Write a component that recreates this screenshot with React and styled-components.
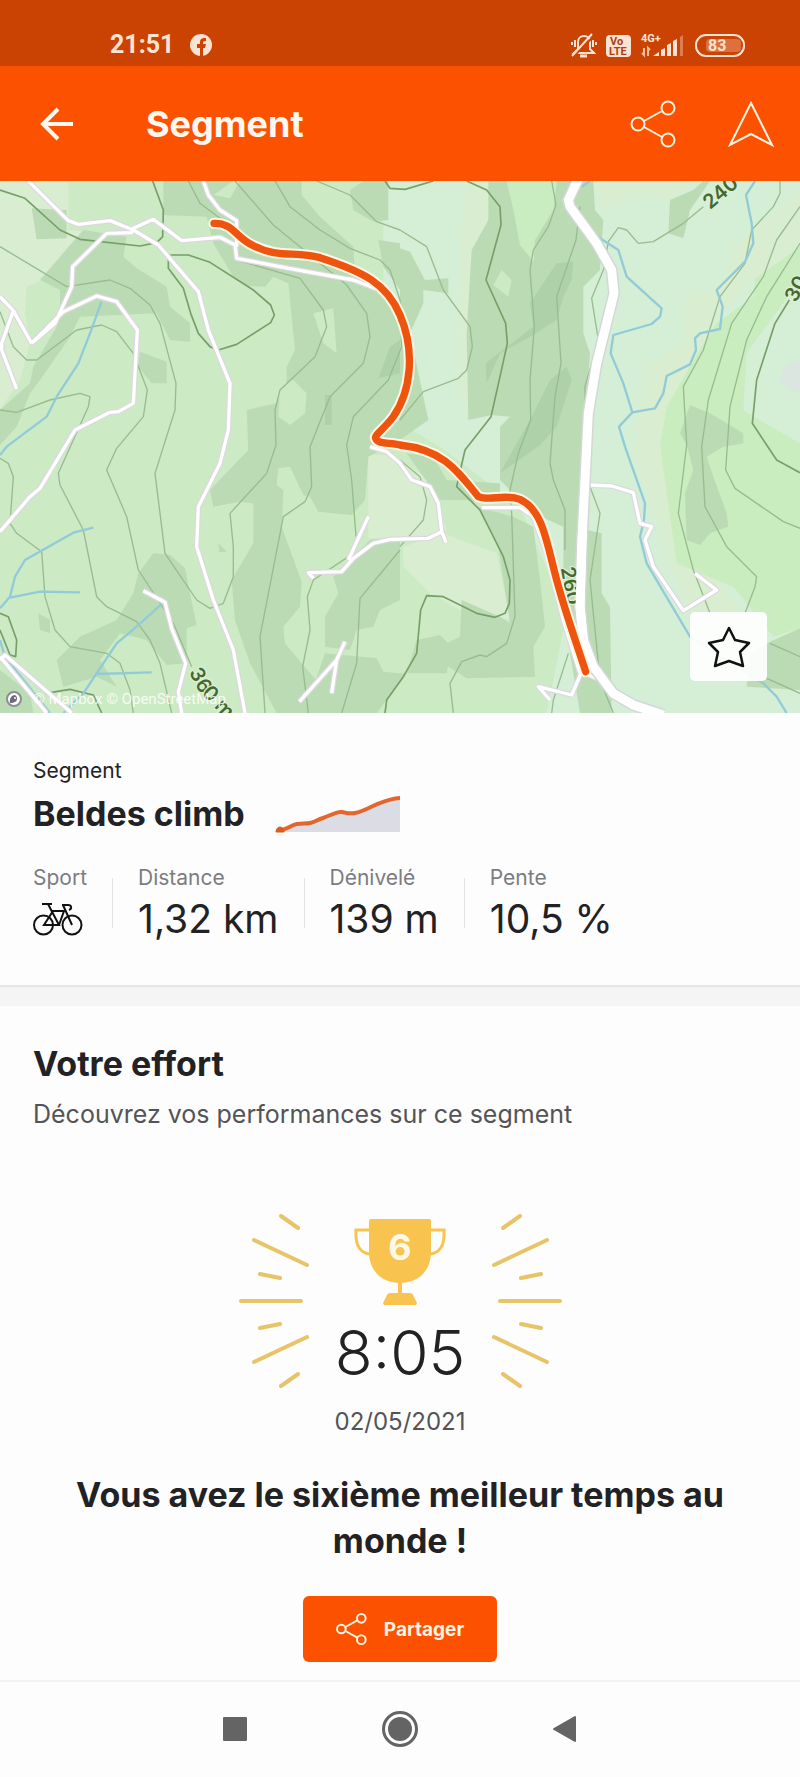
import React, { useState } from 'react';
import styled, { createGlobalStyle } from 'styled-components';

const GlobalStyle = createGlobalStyle`
    * {
        box-sizing: border-box;
    }

    body {
        margin: 0;
        background-color: #fdfdfd;
        color: #222225;
        font-family: Inter, 'Liberation Sans', sans-serif;
    }

    h1, h2, p, dl, dt, dd {
        margin: 0;
    }
`;

const stats = [
    { label: 'Distance', value: '1,32 km' },
    { label: 'Dénivelé', value: '139 m' },
    { label: 'Pente', value: '10,5 %' },
];

const fields = [
    'M0 3H205V150L320 160 220 260 80 320 75 400 90 490 60 600 0 690Z',
    'M1105 825L1180 825 1290 900 1340 1050 1290 1075 1105 1075Z',
    'M1210 1100L1330 1060 1490 1120 1530 1320 1380 1290 1290 1240 1210 1160Z',
    'M2200 200L2400 30V200L2260 300 2150 420 2000 680 1980 795 2030 1150 2150 1200 2250 1330 2060 1300 1960 1000 1900 800 1940 560 2050 480 2060 340 2160 330Z',
    'M1780 3H2100L2010 60 1920 40 1810 90Z',
    'M1400 3H1465V120L1415 210 1410 440 1400 700 1370 600 1380 200Z',
];

const woods = [
    'M490 3H905V45L960 110 1060 200 1065 285 1200 390 1225 500 1240 560 1285 720 1200 780 1105 830 1095 960 1055 1005 955 995 930 950 910 945 870 860 835 865 830 915 850 930 845 1040 905 1205 900 1280 850 1340 855 1390 905 1450 1000 1560 1010 1599H830L750 1450 705 1320 695 1200 760 1090 760 970 720 965 640 980 630 930 745 810 740 690 830 670 860 610 860 560 885 510 865 310 820 290 795 320 745 318 700 290 640 190 620 110 490 105Z',
    'M250 150L380 170 370 230 410 265 500 320 510 380 570 430 570 485 510 480 470 400 240 410 210 470 120 600 90 640 50 740 0 795V690L90 610 100 560 170 440 180 400 180 330 120 300 180 230Z',
    'M95 85L200 90V175L110 178Z',
    'M1050 30L1090 3H1165V120L1120 125 1060 90Z',
    'M1135 180L1200 190V330L1150 260Z',
    'M420 515L500 545V610L455 610 415 560Z',
    'M415 1180L460 1120 510 1125 555 1165 580 1290 590 1335 560 1345 560 1450 500 1455 440 1380 360 1360 300 1440 350 1520 290 1490 190 1520 170 1440 240 1370 350 1320 400 1240Z',
    'M115 1300L150 1320V1360L120 1350Z',
    'M655 1090L680 1115 658 1117Z',
    'M0 1470L90 1540 100 1599H0Z',
    'M1200 1070L1110 1080 1000 1190 1015 1240 975 1310 975 1400 1050 1410 1070 1350 1120 1340 1140 1290 1200 1260Z',
    'M975 1420L1130 1435 1150 1475 1200 1480 1340 1480 1355 1400 1320 1365 1250 1380 1220 1480 1130 1599H880L940 1520Z',
    'M1465 3H1520L1540 90 1560 195 1600 245 1605 180 1660 90 1670 3H1780L1785 90 1810 120 1800 270 1750 320 1750 460 1770 520 1750 795 1760 1050 1805 1060 1805 1240 1830 1280 1835 1599H1740L1710 1420 1690 1200 1690 1040 1600 1000 1500 900 1500 740 1530 710 1475 705 1405 720 1400 460 1415 210 1465 120Z',
    'M1200 205L1230 215 1275 300 1345 295V340L1270 330 1270 370 1230 460 1285 720 1200 760Z',
    'M2010 60L2080 30 2110 3H2130L2070 90 2050 175 2005 160Z',
    'M2070 675L2130 700 2230 760 2230 790 2170 800 2120 830 2140 890 2180 1000 2185 1040 2130 1060 2100 1095 2060 1080 2055 940 2080 870 2060 795 2040 760Z',
    'M2400 1345L2310 1385 2250 1420 2240 1520 2400 1530Z',
    'M1220 820L1300 830 1340 900 1500 910 1500 970 1440 970 1400 960 1320 960Z',
    'M1430 980L1540 1010 1600 1040 1620 1200 1635 1340 1600 1400 1605 1490 1400 1495 1280 1420 1380 1370 1385 1260 1500 1310 1530 1330 1495 1100Z',
];

const thickets = [
    'M1670 250L1720 245 1715 300 1690 350 1670 420 1590 470 1500 520 1460 610 1457 550 1600 440 1590 370Z',
    'M1650 600L1700 560 1715 600 1670 740 1620 795 1500 880 1590 720Z',
    'M1170 500L1200 480V580L1135 595Z',
    'M975 645H995V735H975Z',
];

const clearings = [
    'M940 400L1000 385 1010 520 970 490Z',
    'M840 620L880 600 920 640 915 700 870 735 835 710Z',
    'M1505 270L1535 300 1525 350 1480 315Z',
    'M640 45L700 3H720L690 55Z',
];

const roads = [
    'M85 3L205 122 235 133 330 122 400 150 475 195 595 335 625 450 690 610 685 750 660 850 595 980 590 1100 640 1260 700 1410 735 1599',
    'M95 490L165 430 215 320 218 260 320 160 395 158 400 145 460 118 545 182 660 172 705 195 710 235 850 262 1060 300 1140 330',
    'M610 3L625 45 660 90 710 122V200',
    'M0 350L40 392 95 490M40 392L5 490 5 510 50 627',
    'M95 490L190 395 290 348 350 365 412 450 400 670 355 695 330 697 225 750 120 925 90 950 0 1055',
    'M430 1232L495 1267 515 1345 557 1450 535 1535 545 1599',
    'M898 1565L1010 1440 1035 1385M1010 1440L995 1540',
    'M1105 1010L1045 1140M940 1195L925 1178 1025 1175 1060 1135 1120 1090 1170 1078 1285 1075 1325 1055M1110 800L1160 815 1200 850 1235 900 1290 920 1315 970 1325 1055 1338 1087',
    'M0 1430L140 1599M0 1440L15 1425 215 1599',
    'M1445 983H1560L1600 1010 1640 1120 1690 1320 1740 1480',
    'M1770 915L1835 918 1900 938 1920 1030 1955 1040 1935 1080 1960 1160 2050 1292 2150 1230 2085 1180',
    'M1650 1560L1615 1520 1715 1545 1745 1475 1790 1495',
];

const mainRoad =
    'M1738 -10L1705 60 1710 80 1790 190 1835 270 1842 340 1790 550 1765 700 1755 900 1745 1100 1740 1280 1750 1380 1780 1460 1840 1540 1900 1575 1990 1605';

const route =
    'M642 130C700 128 705 172 760 197C835 235 885 213 960 233C1090 275 1160 310 1200 405C1245 510 1235 630 1180 710C1150 750 1122 765 1127 775C1135 795 1170 786 1200 795C1330 810 1370 870 1435 950C1470 965 1510 940 1560 958C1630 990 1640 1090 1670 1200C1700 1310 1730 1390 1757 1475';

const rivers = [
    'M305 365L270 460 235 550 170 650 140 710 20 800 0 825',
    'M280 1043L220 1058 75 1140 45 1190 30 1250 0 1285M30 1253L120 1235 240 1237',
    'M485 1272L410 1340 350 1390 290 1480 250 1540 190 1599M290 1482L455 1477',
    'M0 1380L15 1430 150 1599',
    'M1770 3L1745 20M1785 165L1855 210 1880 290 1985 385 1980 410 1955 432 1840 465 1832 520 1870 610 1897 697 1965 685 1990 640 2000 588 2070 553 2088 510 2085 475 2100 460 2160 447 2168 380 2150 330 2235 245 2260 190 2255 130 2238 45 2265 3',
    'M1897 697L1857 740 1875 800 1935 970 1932 1020 1920 1070 1940 1150 2070 1370 2290 1510 2330 1550 2360 1599',
];

const contours = [
    'M0 200L200 320 330 300 390 325 450 375 480 430 528 610 525 690 465 880 495 1120 590 1260 630 1285 670 1270 700 1190 700 1100 690 1000 800 880 828 795 825 690 840 630 945 530 980 440 970 390 900 295 710 240',
    'M0 395L40 500 80 540 110 540 230 450 305 435 350 455 400 520 442 630 430 710 350 805 320 870 380 1010 415 1170 520 1330 575 1460',
    'M0 690L50 697 150 660 240 640 270 650 265 680 175 880 180 915 250 1050 290 1250 320 1280 410 1325 450 1380 480 1450 515 1599',
    'M0 835L25 850 40 890 30 1030 50 1060 125 1115 135 1250 165 1350 210 1400 320 1420 360 1450 390 1530 400 1599',
    'M565 3L600 70 680 130 710 155',
    'M705 3L820 135 900 200 1040 315 1100 400 1110 470 1090 550 990 650 930 800 935 920 915 965 850 1010 780 1370 795 1599',
    'M825 3L870 80 960 150 1050 205 1140 240 1170 270 1200 360 1205 500 1165 600 1060 710 1040 795 1055 900 1068 1070',
    'M950 3L1050 45 1130 125 1200 150 1280 200 1330 330 1410 440 1417 500 1400 570 1375 595 1270 635 1200 720',
    'M1200 1110L1080 1255 1070 1450 1025 1599',
    'M1060 1120L940 1200 922 1250 930 1350 908 1460 925 1599',
    'M1655 3L1668 75 1645 140 1600 210 1590 270 1603 440 1590 600 1592 720 1555 820 1530 930 1535 1000 1545 1310 1520 1390 1460 1430 1440 1425 1385 1445 1350 1510 1360 1599',
    'M1740 80L1728 180 1670 350 1683 550 1665 650 1650 850 1660 900 1695 990 1695 1110',
    'M2110 80L2050 130 1960 185 1915 190 1880 150 1855 143 1825 185 1810 270 1775 355 1795 480 1755 620 1755 760 1770 920 1800 1000 1770 1200 1790 1400 1800 1500 1840 1599',
    'M2340 3L2340 40 2320 80 2255 150 2235 250 2160 350 2110 510 2050 620 2060 795 2035 1000 2080 1170 2130 1300',
    'M2400 80L2330 180 2290 290 2195 430 2125 660 2105 800 2115 980 2180 1100 2270 1190 2265 1220 2235 1300',
    'M2400 190L2300 350 2240 480 2190 680 2177 870 2205 925 2350 1025 2400 1045',
    'M1705 1420L1660 1560 1655 1599',
    'M1200 840L1260 890 1280 960 1270 1020 1200 1100',
    'M2310 1390L2400 1430M2300 1495L2400 1540',
];

const majorContours = [
    'M0 30L75 55 180 150 240 178 420 198 470 188 488 170 490 90 458 3',
    'M505 225H565L630 247 760 330 812 375 823 405 812 428 710 493 655 510 630 500 595 460 572 400 550 325 505 265Z',
    'M1155 3L1170 25 1215 28 1300 3M1400 3L1460 30 1500 80 1503 135 1458 300 1517 430 1522 490 1500 590 1473 710 1395 810 1370 920 1440 990 1510 1130 1530 1200 1528 1270 1515 1300 1485 1312 1430 1300 1330 1250 1280 1247 1262 1290 1250 1420 1210 1490 1160 1560 1155 1599',
    'M2368 360L2325 430 2270 600 2257 730 2330 840 2400 878',
    'M0 1300L25 1310 50 1380 47 1430 30 1425 0 1350',
    'M135 1540L210 1528 280 1545 305 1599',
];

const RouteMap = () => (
    <MapDrawing viewBox="0 3 2400 1596" role="img" aria-label="Carte du segment">
        <rect width="2400" height="1600" fill="#cceac4" />
        <path d="M1150 3H2400V1599H1640L1700 1300 1560 980 1320 800 1150 700Z" fill="#d5efd7" />
        <path
            d="M2400 180L2270 260 2260 350 2150 430 2080 540 2000 680 1980 795 2020 1150 2200 1220 2320 1370 2400 1345V790L2330 750 2230 690 2240 520 2400 300Z"
            fill="#c9edbf"
        />
        <path d="M1520 3H1670L1660 90 1590 250 1550 180Z" fill="#c9edc1" />
        <g fill="#d9edd1">
            {fields.map((d) => <path key={d} d={d} />)}
        </g>
        <path d="M2350 560L2400 540V640L2340 610Z" fill="#dae6df" />
        <g fill="#bbdbb4">
            {woods.map((d) => <path key={d} d={d} />)}
        </g>
        <g fill="#7fae83" fillOpacity="0.22">
            {thickets.map((d) => <path key={d} d={d} />)}
        </g>
        <g fill="#cceac4">
            {clearings.map((d) => <path key={d} d={d} />)}
        </g>
        <g fill="none" strokeLinejoin="round">
            <g stroke="#98bc8f" strokeWidth="4">
                {contours.map((d) => <path key={d} d={d} />)}
            </g>
            <g stroke="#779f69" strokeWidth="5">
                {majorContours.map((d) => <path key={d} d={d} />)}
            </g>
            <g stroke="#92cbd8" strokeWidth="7">
                {rivers.map((d) => <path key={d} d={d} />)}
            </g>
            <g stroke="#dcd8e0" strokeWidth="17">
                {roads.map((d) => <path key={d} d={d} />)}
            </g>
            <g stroke="#ffffff" strokeWidth="10">
                {roads.map((d) => <path key={d} d={d} />)}
            </g>
            <path d={mainRoad} stroke="#d3d8d6" strokeWidth="36" />
            <path d={mainRoad} stroke="#ffffff" strokeWidth="27" />
        </g>
        <ContourLabels>
            <text transform="translate(2130 90) rotate(-40)">240</text>
            <text transform="translate(2388 370) rotate(-62)">30</text>
            <text transform="translate(566 1476) rotate(62)">36</text>
            <text transform="translate(604 1540) rotate(47)">0 m</text>
            <text transform="translate(1682 1164) rotate(80)">260</text>
        </ContourLabels>
        {/* the main road runs over the end of the 260 label */}
        <path d="M1747 1060L1740 1280 1750 1380" fill="none" stroke="#ffffff" strokeWidth="27" />
        <g fill="none" strokeLinecap="round" strokeLinejoin="round">
            <path d={route} stroke="#fdf6e6" strokeWidth="34" />
            <path d={route} stroke="#ee540d" strokeWidth="22" />
        </g>
    </MapDrawing>
);

const ShareIcon = ({ size = 48, weight = 2 }) => (
    <svg width={size} height={size} viewBox="0 0 48 48" fill="none" stroke="#fff3e4" strokeWidth={weight}>
        <circle cx="8" cy="24" r="6.5" />
        <circle cx="38" cy="8" r="6.5" />
        <circle cx="38" cy="40" r="6.5" />
        <path d="M14 21L32 11M14 27L32 37" />
    </svg>
);

const StatusIcons = () => (
    <svg width="176" height="26" viewBox="0 0 176 26">
        {/* muted bell */}
        <g fill="none" stroke="#fbe3d3" strokeWidth="2">
            <path d="M4 21H24L20 17V10C20 6 17 4 14 4S8 6 8 10V17Z" />
            <path d="M4 24L24 4" stroke="#cb4302" strokeWidth="2" />
            <path d="M2 24L22 2M5 8V15M2 10V13M23 8V15M26 10V13" />
            <path d="M10 24H17" strokeWidth="3" />
        </g>
        <rect x="36" y="3" width="25" height="22" rx="4" fill="#fbe3d3" />
        <StatusText x="40" y="13" $size={11} $dark>Vo</StatusText>
        <StatusText x="39" y="23" $size={11} $dark>LTE</StatusText>
        <StatusText x="71" y="10" $size={11}>4G+</StatusText>
        <path d="M74 16V23L72 21M78 24V16L80 18" fill="none" stroke="#f3bf9f" strokeWidth="2" />
        <path d="M83 24L89 20V24ZM91 18L95 16V24H91ZM97 13L101 11V24H97ZM103 9L107 7V24H103Z" fill="#fbe3d3" />
        <path d="M110 5L113 3V24H110Z" fill="#dd7c50" />
        <rect x="126" y="3" width="48" height="21" rx="10" fill="none" stroke="#fbe3d3" strokeWidth="2" />
        <rect x="136" y="7" width="35" height="13" rx="4" fill="#dc703f" />
        <StatusText x="138" y="19" $size={16}>83</StatusText>
    </svg>
);

const Rays = () => (
    <svg width="71" height="176" viewBox="0 0 71 176" fill="none" stroke="#e8c468" strokeWidth="4" strokeLinecap="round">
        <path d="M42 3L59 15M15 27L68 52M21 61L41 65M2 88H62M21 115L41 111M15 149L68 124M42 173L59 161" />
    </svg>
);

const Trophy = () => (
    <svg width="94" height="88" viewBox="0 0 94 88">
        <path d="M18 12H3V17C3 28 8 35 17 36M76 12H91V17C91 28 86 35 77 36" fill="none" stroke="#f8c44f" strokeWidth="3" />
        <path d="M16 3Q16 1 18 1H76Q78 1 78 3V34C78 52 66 65 47 65S16 52 16 34Z" fill="#f8c44f" />
        <path d="M45 62H49V75H57Q59 75 60 77L64 85Q64 87 62 87H32Q30 87 30 85L34 77Q35 75 37 75H45Z" fill="#f8c44f" />
        <TrophyRank x="47" y="42">6</TrophyRank>
    </svg>
);

const App = () => {
    const [starred, setStarred] = useState(false);

    return (
        <Page>
            <GlobalStyle />
            <StatusBar>
                <Clock>21:51</Clock>
                <svg width="24" height="24" viewBox="0 0 24 24">
                    <circle cx="12" cy="12" r="11" fill="#fbe3d3" />
                    <path d="M11 23V15H8V11H11V9C11 6 13 5 15 5H17V8H16Q14 8 14 10V11H17L16 15H14V23Z" fill="#cb4302" />
                </svg>
                <Spacer />
                <StatusIcons />
            </StatusBar>

            <AppBar>
                <IconButton aria-label="Retour">
                    <svg width="34" height="34" viewBox="0 0 34 34" fill="none" stroke="#fff8f0" strokeWidth="4">
                        <path d="M33 17H3M18 2L3 17L18 32" />
                    </svg>
                </IconButton>
                <BarTitle>Segment</BarTitle>
                <Spacer />
                <IconButton aria-label="Partager le segment">
                    <ShareIcon />
                </IconButton>
                <IconButton aria-label="Itinéraire">
                    <svg width="48" height="48" viewBox="0 0 48 48" fill="none" stroke="#fff3e4" strokeWidth="2">
                        <path d="M24 3L45 45L24 34L3 45Z" />
                    </svg>
                </IconButton>
            </AppBar>

            <MapArea>
                <RouteMap />
                <Attribution>
                    <svg width="18" height="18" viewBox="0 0 18 18">
                        <circle cx="9" cy="9" r="7" fill="#ffffff" stroke="#8b8f94" strokeWidth="2" />
                        <path d="M5 13C4 8 7 5 10 5A4 4 0 0 1 10 12C8 13 6 13 5 13Z" fill="#6d6a7c" />
                        <circle cx="10" cy="8" r="1" fill="#ffffff" />
                    </svg>
                    <span>© Mapbox © OpenStreetMap</span>
                </Attribution>
                <StarButton aria-label="Ajouter aux favoris" aria-pressed={starred} onClick={() => setStarred(!starred)}>
                    <svg width="44" height="42" viewBox="0 0 44 42" fill={starred ? '#111111' : 'none'} stroke="#111111" strokeWidth="2.5" strokeLinejoin="round">
                        <path d="M22 2L28 14L42 17L33 26L36 40L22 35L8 40L11 26L2 17L16 14Z" />
                    </svg>
                </StarButton>
            </MapArea>

            <Summary>
                <Kind>Segment</Kind>
                <NameRow>
                    <Heading>Beldes climb</Heading>
                    <svg width="126" height="38" viewBox="0 0 126 38">
                        <path d="M3 37L22 30 35 28 48 23 67 17 78 18 98 12 125 3V37Z" fill="#dcdce4" />
                        <path
                            d="M5 35C12 35 16 30 22 29S30 29 35 28S42 25 48 23S62 16 67 17S75 19 80 18S92 14 98 11S118 3 125 3"
                            fill="none"
                            stroke="#e3662c"
                            strokeWidth="4"
                        />
                        <path d="M1 37A4 5 0 0 1 9 37Z" fill="#e05a1e" stroke="#e05a1e" />
                    </svg>
                </NameRow>
                <StatList>
                    <Stat>
                        <StatLabel>Sport</StatLabel>
                        <StatValue>
                            <svg width="50" height="34" viewBox="0 0 50 34" role="img" aria-label="Vélo" fill="none" stroke="#111111" strokeWidth="2">
                                <circle cx="10.5" cy="23" r="9.5" />
                                <circle cx="39" cy="23" r="9.5" />
                                <path d="M9 2H19M15 2L26 23H11L20 9H31L26 23M30 3L39 23M29 3H35C39 3 39 7 36 8" />
                            </svg>
                        </StatValue>
                    </Stat>
                    {stats.map((stat) => (
                        <Stat key={stat.label}>
                            <StatLabel>{stat.label}</StatLabel>
                            <StatValue>{stat.value}</StatValue>
                        </Stat>
                    ))}
                </StatList>
            </Summary>

            <Effort>
                <Heading>Votre effort</Heading>
                <Intro>Découvrez vos performances sur ce segment</Intro>
                <Result>
                    <Rays />
                    <Score>
                        <Trophy />
                        <Time>8:05</Time>
                    </Score>
                    <Mirrored>
                        <Rays />
                    </Mirrored>
                </Result>
                <DateText>02/05/2021</DateText>
                <Headline>Vous avez le sixième meilleur temps au monde !</Headline>
                <ShareButton>
                    <ShareIcon size={32} weight={3} />
                    Partager
                </ShareButton>
            </Effort>

            <NavBar>
                <IconButton aria-label="Applications récentes">
                    <svg width="36" height="36" viewBox="0 0 36 36">
                        <rect x="6" y="6" width="24" height="24" rx="1" fill="#646464" />
                    </svg>
                </IconButton>
                <IconButton aria-label="Accueil">
                    <svg width="36" height="36" viewBox="0 0 36 36">
                        <circle cx="18" cy="18" r="16.5" fill="none" stroke="#646464" strokeWidth="3" />
                        <circle cx="18" cy="18" r="12" fill="#646464" />
                    </svg>
                </IconButton>
                <IconButton aria-label="Précédent">
                    <svg width="36" height="36" viewBox="0 0 36 36">
                        <path d="M7 18L28 6V30Z" fill="#646464" stroke="#646464" strokeWidth="2" strokeLinejoin="round" />
                    </svg>
                </IconButton>
            </NavBar>
        </Page>
    );
};

const Page = styled.div`
    min-height: 100vh;
    display: flex;
    flex-direction: column;
`;

const StatusBar = styled.div`
    display: flex;
    align-items: center;
    gap: 15px;
    height: 66px;
    padding: 24px 54px 0 110px;
    background-color: #cb4302;
`;

const Clock = styled.span`
    color: #fbe3d3;
    font-family: Roboto, sans-serif;
    font-size: 25px;
    font-weight: 700;
    line-height: 32px;
`;

const StatusText = styled.text`
    fill: ${({ $dark }) => ($dark ? '#b04010' : '#fbe3d3')};
    font-family: Roboto, sans-serif;
    font-size: ${({ $size }) => $size}px;
    font-weight: 700;
`;

const Spacer = styled.div`
    flex: 1;
`;

const AppBar = styled.header`
    display: flex;
    align-items: center;
    height: 115px;
    padding: 0 25px 0 40px;
    background-color: #fc5200;

    button:last-child {
        margin-left: 49px;
    }
`;

const IconButton = styled.button`
    display: flex;
    padding: 0;
    border: none;
    background: none;
    cursor: pointer;
`;

const BarTitle = styled.h1`
    margin-left: 72px;
    color: #fff8f0;
    font-size: 36px;
    font-weight: 700;
    line-height: 44px;
`;

const MapArea = styled.div`
    position: relative;
`;

const MapDrawing = styled.svg`
    display: block;
    width: 100%;
    height: auto;
`;

const ContourLabels = styled.g`
    fill: #44692f;
    stroke: #dcefd5;
    stroke-width: 8px;
    paint-order: stroke;
    font-size: 60px;
    font-weight: 600;
`;

const Attribution = styled.div`
    position: absolute;
    left: 5px;
    bottom: 4px;
    display: flex;
    align-items: center;
    gap: 10px;
    color: rgba(255, 255, 255, 0.85);
    font-family: Roboto, sans-serif;
    font-size: 15px;
    line-height: 20px;
`;

const StarButton = styled.button`
    position: absolute;
    right: 33px;
    bottom: 32px;
    display: flex;
    align-items: center;
    justify-content: center;
    width: 77px;
    height: 69px;
    border: none;
    border-radius: 5px;
    background-color: rgba(255, 255, 255, 0.92);
    cursor: pointer;
`;

const Summary = styled.section`
    padding: 44px 33px 42px;
    border-bottom: 2px solid #e6e6e6;
`;

const Kind = styled.p`
    font-size: 21px;
    line-height: 28px;
`;

const NameRow = styled.div`
    display: flex;
    align-items: center;
    gap: 30px;
    margin-top: 7px;
`;

const Heading = styled.h2`
    font-size: 34px;
    font-weight: 700;
    line-height: 44px;
`;

const StatList = styled.dl`
    display: flex;
    margin-top: 28px;
`;

const Stat = styled.div`
    position: relative;
    padding-right: 51px;

    &:not(:last-child)::after {
        content: '';
        position: absolute;
        top: 14px;
        right: 25px;
        width: 1px;
        height: 50px;
        background-color: #e2e2e2;
    }
`;

const StatLabel = styled.dt`
    color: #7c7c80;
    font-size: 21px;
    line-height: 28px;
`;

const StatValue = styled.dd`
    display: flex;
    align-items: center;
    height: 48px;
    margin-top: 3px;
    font-size: 39px;
    font-weight: 400;
    line-height: 48px;
`;

const Effort = styled.section`
    display: flex;
    flex-direction: column;
    align-items: center;
    padding: 36px 33px 18px;
    border-top: 19px solid #f5f5f6;

    ${Heading} {
        align-self: flex-start;
    }
`;

const Intro = styled.p`
    align-self: flex-start;
    margin-top: 12px;
    color: #545458;
    font-size: 25px;
    line-height: 32px;
`;

const Result = styled.div`
    display: flex;
    align-items: center;
    justify-content: center;
    margin-top: 83px;
`;

const Score = styled.div`
    display: flex;
    flex-direction: column;
    align-items: center;
    width: 181px;
    gap: 15px;
`;

const Time = styled.div`
    font-size: 62px;
    font-weight: 300;
    line-height: 64px;
`;

const Mirrored = styled.div`
    display: flex;
    transform: scaleX(-1);
`;

const TrophyRank = styled.text`
    fill: #fff8e6;
    font-size: 36px;
    font-weight: 700;
    text-anchor: middle;
`;

const DateText = styled.p`
    margin-top: 19px;
    color: #545458;
    font-size: 24px;
    line-height: 28px;
`;

const Headline = styled.p`
    margin-top: 36px;
    font-size: 34px;
    font-weight: 700;
    line-height: 46px;
    text-align: center;
`;

const ShareButton = styled.button`
    display: flex;
    align-items: center;
    gap: 16px;
    height: 66px;
    margin-top: 32px;
    padding: 0 33px;
    border: none;
    border-radius: 6px;
    background-color: #fc5200;
    color: #fff3e4;
    font-family: inherit;
    font-size: 19px;
    font-weight: 700;
    cursor: pointer;
`;

const NavBar = styled.nav`
    display: flex;
    align-items: center;
    justify-content: center;
    gap: 129px;
    height: 96px;
    border-top: 2px solid #f3f3f3;
`;

export default App;
